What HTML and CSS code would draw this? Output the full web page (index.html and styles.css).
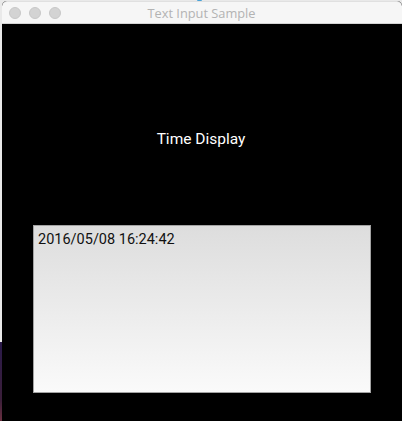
FILE: index.html
```html
<!DOCTYPE html>
<html>
<head>
<meta charset="utf-8">
<link rel="stylesheet" href="styles.css">
</head>
<body>
<div class="desktop">
  <div class="window">
    <div class="titlebar">
      <div class="lights">
        <span class="light"></span>
        <span class="light"></span>
        <span class="light"></span>
      </div>
      <div class="title">Text Input Sample</div>
    </div>
    <div class="content">
      <div class="label">Time Display</div>
      <div class="textbox">2016/05/08 16:24:42</div>
    </div>
  </div>
</div>
</body>
</html>
```

FILE: styles.css
```css
html, body {
  margin: 0;
  padding: 0;
  width: 402px;
  height: 421px;
  overflow: hidden;
}
.desktop {
  width: 402px;
  height: 421px;
  background: linear-gradient(to bottom, #e9e9e9 0, #e9e9e9 342px, #2a1a4a 342px, #3b1f3a 400px, #6a3040 421px);
  padding-top: 1px;
  box-sizing: border-box;
  display: flex;
  position: relative;
}
.desktop::before {
  content: "";
  position: absolute;
  left: 197px;
  top: 0;
  width: 5px;
  height: 2px;
  background: #4aa3d8;
  border-radius: 2px;
}
.window {
  margin-left: 2px;
  flex: 1;
  display: flex;
  flex-direction: column;
  background: #000;
  border-radius: 5px 5px 0 0;
  overflow: hidden;
  position: relative;
}
.titlebar {
  background: #f6f6f6;
  border-bottom: 1px solid #d4d4d4;
  border-top: 1px solid #e0e0e0;
  border-radius: 5px 5px 0 0;
  display: flex;
  align-items: center;
  position: relative;
  box-sizing: content-box;
  height: 21px;
}
.lights {
  display: flex;
  gap: 8px;
  padding-left: 7px;
}
.light {
  width: 12px;
  height: 12px;
  border-radius: 50%;
  background: #d3d3d3;
  border: 0.5px solid #c8c8c8;
  box-sizing: border-box;
}
.title {
  position: absolute;
  left: 0;
  right: 0;
  top: 0;
  bottom: 0;
  display: flex;
  align-items: center;
  justify-content: center;
  font-family: "Open Sans", "Liberation Sans", sans-serif;
  font-size: 12.8px;
  color: #b3b3b3;
  padding-right: 1px;
}
.content {
  flex: 1;
  background: #000;
  display: flex;
  flex-direction: column;
  padding-top: 106px;
}
.label {
  font-family: Roboto, "Liberation Sans", sans-serif;
  font-size: 15.5px;
  line-height: 18px;
  color: #fff;
  text-align: center;
  padding-right: 2px;
}
.textbox {
  margin-top: 77px;
  margin-left: 31px;
  width: 338px;
  height: 168px;
  box-sizing: border-box;
  border: 1px solid #a3a3a3;
  background: linear-gradient(to bottom, #dddddd, #fafafa);
  font-family: Roboto, "Liberation Sans", sans-serif;
  font-size: 14.5px;
  line-height: 17px;
  color: #111;
  padding: 5px 4px;
}
```
